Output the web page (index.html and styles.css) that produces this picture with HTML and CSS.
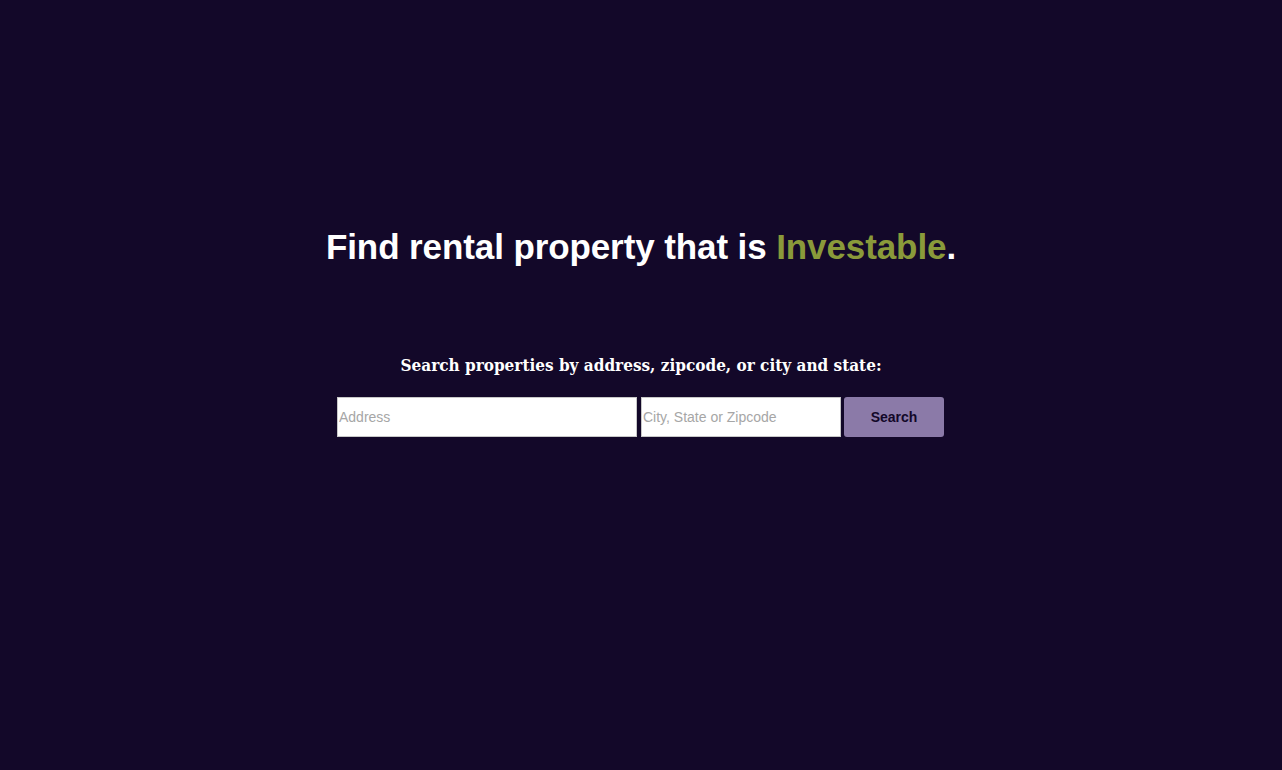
FILE: index.html
```html
<!DOCTYPE html>
<html>
<head>
<meta charset="utf-8">
<link rel="stylesheet" href="styles.css">
</head>
<body>
<main class="hero">
  <h1 class="title">Find rental property that is <span class="accent">Investable</span>.</h1>
  <p class="lead">Search properties by address, zipcode, or city and state:</p>
  <form class="search">
    <input class="field field-address" type="text" placeholder="Address">
    <input class="field field-city" type="text" placeholder="City, State or Zipcode">
    <button class="btn" type="button">Search</button>
  </form>
</main>
</body>
</html>
```
FILE: styles.css
```css
html, body {
  margin: 0;
  padding: 0;
  height: 100%;
}
body {
  background: #130829;
  color: #ffffff;
  font-family: "Liberation Sans", Arial, sans-serif;
}
.hero {
  display: flex;
  flex-direction: column;
  align-items: center;
  padding-top: 222px;
}
.title {
  margin: 0;
  font-size: 35px;
  font-weight: bold;
  line-height: 50px;
  letter-spacing: -0.1px;
}
.accent {
  color: #8a9a3a;
}
.lead {
  margin: 81px 0 0;
  font-family: "DejaVu Serif Condensed", "DejaVu Serif", serif;
  font-stretch: condensed;
  font-weight: bold;
  font-size: 17px;
  line-height: 24px;
}
.search {
  margin-top: 20px;
  display: flex;
  align-items: stretch;
  margin-left: -1px;
}
.field {
  box-sizing: border-box;
  height: 40px;
  border: 1px solid #c8c8c8;
  background: #fff;
  padding: 0 1px;
  font-family: "Liberation Sans", Arial, sans-serif;
  font-size: 14px;
  color: #333;
  outline: none;
  border-radius: 0;
}
.field::placeholder {
  color: #a6a6a6;
}
.field-address {
  width: 300px;
}
.field-city {
  width: 200px;
  margin-left: 4px;
}
.btn {
  box-sizing: border-box;
  width: 100px;
  height: 40px;
  margin-left: 3px;
  border: none;
  border-radius: 3px;
  background: #8b7aa8;
  color: #130829;
  font-family: "Liberation Sans", Arial, sans-serif;
  font-weight: bold;
  font-size: 14px;
}
```
